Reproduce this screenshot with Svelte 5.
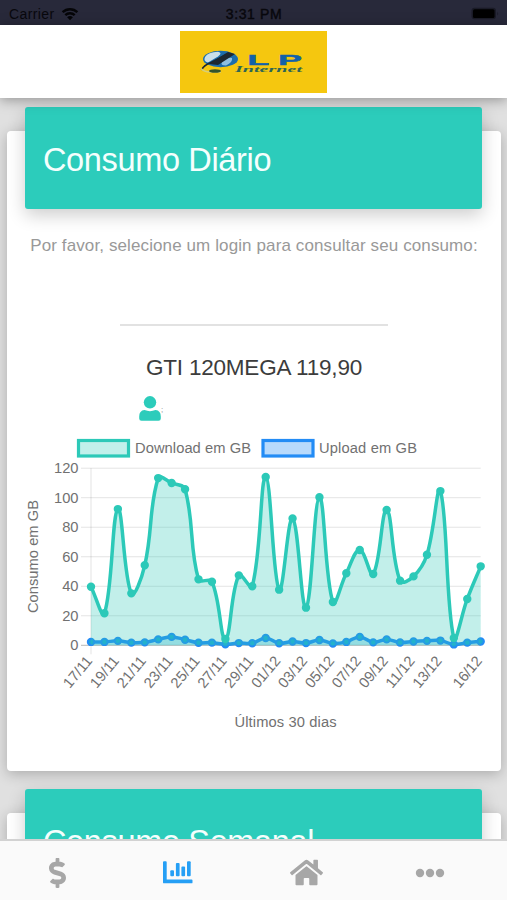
<script>
  const left = 91;
  const right = 480.7;
  const bottom = 645.3 - 430;
  const top = 468.2 - 430;
  const download = [39.7, 21.7, 92.3, 35.2, 54.2, 113.3, 110, 105.7, 44.7, 43.1, 4.3, 47.4, 40, 114, 37.7, 86, 25.5, 100.3, 29.3, 48.8, 64.6, 48.3, 91.7, 43.8, 46.7, 61.4, 104.5, 5, 31.4, 53.5];
  const upload = [2.3, 2.3, 3, 1.8, 2, 4, 5.7, 3.8, 1.7, 1.8, 0.7, 1.5, 1.4, 4.9, 1.4, 2.6, 1.5, 3.6, 1.2, 2.3, 5.7, 2, 4, 1.9, 2.6, 3, 3.2, 0.6, 1.8, 2.6];
  const labels = [[0, '17/11'], [2, '19/11'], [4, '21/11'], [6, '23/11'], [8, '25/11'], [10, '27/11'], [12, '29/11'], [14, '01/12'], [16, '03/12'], [18, '05/12'], [20, '07/12'], [22, '09/12'], [24, '11/12'], [26, '13/12'], [29, '16/12']];
  const ticks = [0, 20, 40, 60, 80, 100, 120];

  const px = (i) => left + (i * (right - left)) / 29;
  const py = (v) => bottom - (v * (bottom - top)) / 120;
  const points = (data) => data.map((v, i) => [px(i), py(v)]);
  const cap = (y) => Math.max(top, Math.min(bottom, y));

  // Smooth curve through the points, tension 0.4, handles kept inside the plot
  function curve(data) {
    const p = points(data);
    const handles = p.map((c, i) => {
      const a = p[i - 1] ?? c;
      const b = p[i + 1] ?? c;
      const d1 = Math.hypot(c[0] - a[0], c[1] - a[1]);
      const d2 = Math.hypot(b[0] - c[0], b[1] - c[1]);
      const fa = (0.4 * d1) / (d1 + d2);
      const fb = (0.4 * d2) / (d1 + d2);
      const dx = b[0] - a[0];
      const dy = b[1] - a[1];
      return [c[0] - fa * dx, cap(c[1] - fa * dy), c[0] + fb * dx, cap(c[1] + fb * dy)];
    });
    let d = `M${p[0]}`;
    for (let i = 1; i < p.length; i++) {
      d += `C${handles[i - 1][2]},${handles[i - 1][3]} ${handles[i][0]},${handles[i][1]} ${p[i]}`;
    }
    return d;
  }

  const series = [
    { name: 'download', data: download },
    { name: 'upload', data: upload }
  ].map((s) => ({ ...s, line: curve(s.data), dots: points(s.data) }));
</script>

<div class="screen">
  <div class="status">
    <div class="carrier">
      <span>Carrier</span>
      <svg width="18" height="14" viewBox="0 0 18 14">
        <path d="M1.6 5.2a10.6 10.6 0 0 1 14.8 0" />
        <path d="M4.3 8.2a6.8 6.8 0 0 1 9.4 0" />
        <path class="solid" d="M9 13.2L6.1 10.3a4.2 4.2 0 0 1 5.8 0z" />
      </svg>
    </div>
    <span class="time">3:31 PM</span>
    <svg class="battery" width="28" height="13" viewBox="0 0 28 13">
      <rect x="0.5" y="0.8" width="24.5" height="11.4" rx="3" />
      <rect class="charge" x="2" y="2.2" width="21.5" height="8.8" rx="1.5" />
      <path d="M26.3 4.5q1.5 2 0 4z" />
    </svg>
  </div>

  <header>
    <svg class="logo" width="147" height="62" viewBox="0 0 147 62">
      <rect width="147" height="62" fill="#f5c70f" />
      <ellipse cx="40.500" cy="28" rx="17.500" ry="8.200" fill="#1c6dac" />
      <path d="M25 26q3-5 13-5.200q5 1 0 4.600l-10 6q-5-1-3-5.400z" fill="#c9dfe9" />
      <path d="M42 31q5-5 10-4q1 4-6 7.500q-6 0-4-3.500z" fill="#8fbfe0" />
      <path d="M49 22.500L31 31.500Q24 34 21.500 39" fill="none" stroke="#1d2831" stroke-width="1.800" />
      <path d="M48 21l7 2-17 11-9.500-1z" fill="#1d2831" />
      <path d="M21 37.500q3 3.500 9 3.500h11" fill="none" stroke="#d8cf78" stroke-width="1.600" />
      <ellipse cx="35" cy="40" rx="6" ry="1.700" fill="#35552c" />
      <text x="67.500" y="34" class="brand" textLength="54.500" lengthAdjust="spacingAndGlyphs">L P</text>
      <text x="55" y="41" class="sub" textLength="67" lengthAdjust="spacingAndGlyphs">Internet</text>
    </svg>
  </header>

  <main>
    <section class="card daily">
      <div class="banner"><h1>Consumo Diário</h1></div>
      <p class="hint">Por favor, selecione um login para consultar seu consumo:</p>
      <hr />
      <h2>GTI 120MEGA 119,90</h2>
      <div class="user">
        <svg width="22" height="26" viewBox="0 0 22 26">
          <circle cx="11" cy="6.300" r="6.200" />
          <path d="M5.500 14q5.500 2.300 11 0q5.300.5 5.300 6.500v2q0 2.300-2.300 2.300h-17q-2.300 0-2.300-2.300v-2q0-6 5.300-6.500z" />
        </svg>
        <span>;</span>
      </div>
      <svg class="chart" width="507" height="310" viewBox="0 0 507 310">
        <rect class="download key" x="78.500" y="10.500" width="50" height="15.500" />
        <text x="135" y="23" textLength="116">Download em GB</text>
        <rect class="upload key" x="263" y="10.500" width="50" height="15.500" />
        <text x="319" y="23" textLength="98">Upload em GB</text>

        {#each ticks as t}
          <line class="grid" class:zero={t === 0} x1="81" x2={right} y1={py(t)} y2={py(t)} />
          <text x="78.500" y={py(t) + 5} text-anchor="end">{t}</text>
        {/each}
        <line class="grid" x1={left} x2={left} y1={top} y2={bottom + 9} />

        {#each [...series].reverse() as s}
          <path class="area {s.name}" d={`${s.line}V${bottom}H${left}Z`} />
          <path class="line {s.name}" d={s.line} />
          {#each s.dots as [x, y]}
            <circle class={s.name} cx={x} cy={y} r="3.200" />
          {/each}
        {/each}

        {#each labels as [i, label]}
          <text text-anchor="end" textLength="36" transform={`translate(${px(i) + 2} ${bottom + 16}) rotate(-50)`}>{label}</text>
        {/each}
        <text transform="translate(38 183) rotate(-90)" textLength="113">Consumo em GB</text>
        <text x="234.500" y="297" textLength="102">Últimos 30 dias</text>
      </svg>
    </section>

    <section class="card weekly">
      <div class="banner"><h1>Consumo Semanal</h1></div>
    </section>
  </main>

  <nav>
    <svg class="dollar" width="17" height="30" viewBox="0 0 288 512" preserveAspectRatio="none">
      <path d="M209.2 233.4l-108-31.600C88.700 198.200 80 186.500 80 173.500c0-16.300 13.200-29.500 29.500-29.500h66.300c12.200 0 24.200 3.700 34.200 10.500 6.100 4.100 14.300 3.100 19.500-2l34.800-34c7.100-6.900 6.100-18.400-1.800-24.500C238 74.800 207.400 64.100 176 64V16c0-8.800-7.200-16-16-16h-32c-8.800 0-16 7.200-16 16v48h-2.500C45.800 64-5.400 118.700.5 183.600c4.200 46.100 39.400 83.600 83.800 96.600l102.500 30c12.500 3.700 21.200 15.300 21.200 28.300 0 16.300-13.200 29.500-29.500 29.500h-66.300C100 368 88 364.300 78 357.500c-6.100-4.100-14.300-3.100-19.500 2l-34.800 34c-7.100 6.900-6.100 18.400 1.800 24.500 24.500 19.200 55.100 29.900 86.500 30v48c0 8.800 7.200 16 16 16h32c8.800 0 16-7.200 16-16v-48.200c46.600-.9 90.300-28.600 105.700-72.700 21.500-61.600-14.600-124.800-72.500-141.700z" />
    </svg>
    <svg class="bars" width="30" height="23" viewBox="0 0 30 23">
      <path d="M1 .2h1.800q.9 0 .9 1V18.600H28.600q.9 0 .9.900V21.400q0 .9-.9.900H1q-1 0-1-.9V1.200q0-1 1-1z" />
      <rect x="7.300" y="9.300" width="3.700" height="6" rx="1" />
      <rect x="12.900" y="2" width="3.700" height="13.300" rx="1" />
      <rect x="18.400" y="5.600" width="3.700" height="9.700" rx="1" />
      <rect x="24" y=".2" width="3.700" height="15.100" rx="1" />
    </svg>
    <svg class="home" width="33" height="29" viewBox="0 0 576 512" preserveAspectRatio="none">
      <path d="M280.370 148.260L96 300.110V464a16 16 0 0 0 16 16l112.060-.29a16 16 0 0 0 15.920-16V368a16 16 0 0 1 16-16h64a16 16 0 0 1 16 16v95.640a16 16 0 0 0 16 16.050L464 480a16 16 0 0 0 16-16V300L295.670 148.260a12.190 12.190 0 0 0-15.300 0zM571.600 251.470L488 182.560V44.050a12 12 0 0 0-12-12h-56a12 12 0 0 0-12 12v72.610L318.470 43a48 48 0 0 0-61 0L4.340 251.470a12 12 0 0 0-1.600 16.900l25.500 31A12 12 0 0 0 45.150 301l235.220-193.740a12.190 12.190 0 0 1 15.300 0L530.900 301a12 12 0 0 0 16.900-1.600l25.500-31a12 12 0 0 0-1.700-16.930z" />
    </svg>
    <svg class="more" width="30" height="10" viewBox="0 0 30 10">
      <circle cx="5" cy="5" r="4.200" />
      <circle cx="15" cy="5" r="4.200" />
      <circle cx="25" cy="5" r="4.200" />
    </svg>
  </nav>
</div>

<style>
  .screen {
    width: 507px;
    height: 900px;
    overflow: hidden;
    display: flex;
    flex-direction: column;
    background: #e0e0e0;
    font-family: "Liberation Sans", Arial, sans-serif;
  }
  .status {
    flex: none;
    height: 25px;
    box-sizing: border-box;
    padding: 2px 8px 0 9px;
    display: grid;
    grid-template-columns: 1fr auto 1fr;
    align-items: center;
    background: #28293a;
    color: #08080d;
    font-size: 14px;
  }
  .carrier {
    display: flex;
    align-items: center;
    gap: 6px;
    letter-spacing: 0.4px;
  }
  .carrier path {
    fill: none;
    stroke: #050508;
    stroke-width: 2.4;
  }
  .carrier .solid {
    fill: #050508;
    stroke: none;
  }
  .time {
    font-weight: 500;
    letter-spacing: 0.6px;
    -webkit-text-stroke: 0.4px #08080d;
  }
  .battery {
    justify-self: end;
    fill: #1a1b27;
  }
  .charge {
    fill: #000;
  }
  header {
    flex: none;
    height: 73px;
    box-sizing: border-box;
    padding-top: 6px;
    display: flex;
    justify-content: center;
    align-items: flex-start;
    background: #fff;
    box-shadow: 0 2px 12px rgba(0, 0, 0, 0.35);
    z-index: 1;
  }
  .brand {
    font-size: 15px;
    font-weight: bold;
    fill: #1261a8;
    stroke: #1261a8;
    stroke-width: 0.5;
  }
  .sub {
    font: italic bold 8.500px "Liberation Serif", serif;
    fill: #2d6554;
  }
  main {
    flex: 1;
    min-height: 0;
    overflow: hidden;
    padding: 33px 6px 0 7px;
  }
  .card {
    box-sizing: border-box;
    display: flex;
    flex-direction: column;
    align-items: center;
    background: #fff;
    border-radius: 4px;
    box-shadow: 0 3px 14px rgba(0, 0, 0, 0.24);
  }
  .daily {
    height: 640px;
    margin-bottom: 42px;
  }
  .weekly {
    height: 640px;
  }
  .banner {
    flex: none;
    width: 457px;
    height: 102px;
    margin-top: -24px;
    margin-right: 1px;
    box-sizing: border-box;
    padding: 0 18px;
    display: flex;
    align-items: center;
    background: #2cccbb;
    border-radius: 3px;
    box-shadow: 0 6px 18px rgba(0, 0, 0, 0.2);
  }
  h1 {
    margin: 4px 0 0;
    color: #f4fffd;
    font-size: 32.500px;
    font-weight: 400;
    line-height: 40px;
    letter-spacing: -0.35px;
    white-space: nowrap;
  }
  .hint {
    margin: 26px 0 0;
    color: #999;
    font-size: 17px;
    line-height: 22px;
    letter-spacing: 0.11px;
    white-space: nowrap;
  }
  hr {
    width: 268px;
    height: 2px;
    margin: 67px 0 0;
    border: 0;
    background: #e2e2e2;
  }
  h2 {
    margin: 27px 0 0;
    color: #3c3c3c;
    font-size: 22.500px;
    font-weight: 400;
    line-height: 30px;
    letter-spacing: -0.2px;
    white-space: nowrap;
  }
  .user {
    align-self: flex-start;
    height: 26px;
    margin: 13px 0 0 132px;
    display: flex;
    align-items: center;
    fill: #2cccbb;
    color: #888;
    font-size: 8px;
  }
  .chart {
    flex: none;
    margin: 8px 1px 0 0;
    font-size: 14.700px;
  }
  .chart text {
    fill: #717171;
  }
  .grid {
    stroke: rgba(0, 0, 0, 0.11);
    stroke-width: 1;
  }
  .zero {
    stroke: rgba(0, 0, 0, 0.28);
  }
  .download {
    stroke: #2cc9b8;
    fill: #2cc9b8;
  }
  .upload {
    stroke: #238cf5;
    fill: #1fa9d4;
  }
  .key {
    stroke-width: 3.200;
  }
  .key.download {
    fill: #c1f0eb;
  }
  .key.upload {
    fill: #b8dafc;
  }
  .line {
    fill: none;
    stroke-width: 3.500;
  }
  .area {
    stroke: none;
    fill-opacity: 0.29;
  }
  /* class-level fills on .download/.upload must not close the stroked curves */
  .line.download,
  .line.upload {
    fill: none;
  }
  circle.download,
  circle.upload {
    stroke-width: 2;
  }
  nav {
    flex: none;
    height: 61px;
    box-sizing: border-box;
    border-top: 2px solid #d2d2d2;
    padding: 4px 0 0;
    display: flex;
    align-items: center;
    background: #fafafa;
    fill: #a7a7a7;
    z-index: 1;
  }
  .dollar {
    margin-left: 49px;
  }
  .bars {
    margin-left: 97px;
    fill: #259ff5;
  }
  .home {
    margin-left: 97px;
  }
  .more {
    margin-left: 92px;
  }
</style>
